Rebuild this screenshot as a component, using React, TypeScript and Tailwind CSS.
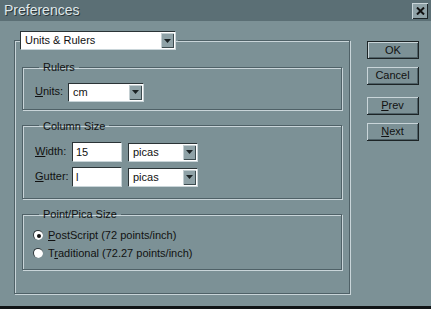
import React from "react"

const etched = "border border-[#4f6167] shadow-[inset_1px_1px_0_#c9d5d9,1px_1px_0_#c9d5d9]"

function Arrow() {
  return (
    <div className="flex h-full w-[13px] items-center justify-center bg-[#8fa2a7] shadow-[inset_1px_1px_0_#c3ced1,inset_-1px_-1px_0_#3d4c50]">
      <svg width="7" height="4" viewBox="0 0 7 4">
        <path d="M0 0h7L3.5 4z" fill="#1b2224" />
      </svg>
    </div>
  )
}

function Select({ value, w, h = 18 }: { value: string; w: number; h?: number }) {
  return (
    <div
      className="flex items-stretch bg-white border-t border-l border-[#2a3336] shadow-[1px_1px_0_#c9d5d9] p-[1px] pl-[4px]"
      style={{ width: w, height: h }}
    >
      <span className="flex-1 leading-[15px] text-[#111]">{value}</span>
      <Arrow />
    </div>
  )
}

function Input({ value }: { value: string }) {
  return (
    <div className="flex h-[19px] w-[49px] items-center bg-white border-t border-l border-[#2a3336] shadow-[1px_1px_0_#c9d5d9] pl-[3px] text-[#111]">
      {value}
    </div>
  )
}

function Button({ label, def }: { label: React.ReactNode; def?: boolean }) {
  return (
    <div
      className={`flex h-[18px] w-[52px] items-center justify-center text-[#111] ${
        def ? "border border-[#1c2426]" : "border-b border-r border-[#1c2426]"
      } shadow-[inset_1px_1px_0_#c9d5d9,inset_-1px_-1px_0_#4f6167]`}
    >
      {label}
    </div>
  )
}

function Radio({ checked, label }: { checked?: boolean; label: React.ReactNode }) {
  return (
    <div className="flex items-center gap-[5px] leading-[13px]">
      <div className="flex h-[10px] w-[10px] items-center justify-center rounded-full bg-white border-t border-l border-[#2a3336]">
        {checked && <div className="h-[4px] w-[4px] rounded-full bg-[#111]" />}
      </div>
      <span className="text-[#111]">{label}</span>
    </div>
  )
}

export default function App() {
  return (
    <div
      className="flex h-[309px] w-[431px] flex-col bg-[#7c9196] text-[11px] border-b-[3px] border-[#101416]"
      style={{ fontFamily: '"Liberation Sans", Arial, sans-serif' }}
    >
      <div className="flex h-[21px] items-center justify-between bg-[#5b6f75] pl-[4px] pr-[3px]">
        <span className="text-[14px] text-[#dfe7ea] [text-shadow:1px_1px_0_#2b3437]">Preferences</span>
        <div className="flex h-[16px] w-[16px] items-center justify-center bg-[#8fa2a7] shadow-[inset_1px_1px_0_#c9d5d9,inset_-1px_-1px_0_#1c2426]">
          <svg width="9" height="8" viewBox="0 0 9 8">
            <path d="M1 0.5L8 7.5M8 0.5L1 7.5" stroke="#111" strokeWidth="2" />
          </svg>
        </div>
      </div>

      <div className="flex flex-1">
        <fieldset className={`ml-[14px] mt-[10px] mb-[12px] w-[336px] px-[7px] pb-[12px] ${etched}`}>
          <legend className="-ml-[2px] pr-[3px]">
            <Select value="Units & Rulers" w={155} />
          </legend>

          <fieldset className={`mt-[10px] px-[12px] pt-[7px] pb-[8px] ${etched}`}>
            <legend className="ml-[4px] px-[4px] text-[#111]">Rulers</legend>
            <div className="flex items-center">
              <span className="w-[33px] text-[#111]"><u>U</u>nits:</span>
              <Select value="cm" w={75} />
            </div>
          </fieldset>

          <fieldset className={`mt-[8px] px-[12px] pt-[8px] pb-[12px] ${etched}`}>
            <legend className="ml-[4px] px-[4px] text-[#111]">Column Size</legend>
            <div className="flex flex-col gap-[6px]">
              <div className="flex items-center">
                <span className="w-[37px] text-[#111]"><u>W</u>idth:</span>
                <Input value="15" />
                <div className="ml-[7px]"><Select value="picas" w={69} /></div>
              </div>
              <div className="flex items-center">
                <span className="w-[37px] text-[#111]"><u>G</u>utter:</span>
                <Input value="l" />
                <div className="ml-[7px]"><Select value="picas" w={69} /></div>
              </div>
            </div>
          </fieldset>

          <fieldset className={`mt-[7px] px-[10px] pt-[6px] pb-[9px] ${etched}`}>
            <legend className="ml-[6px] px-[4px] text-[#111]">Point/Pica Size</legend>
            <div className="flex flex-col gap-[5px]">
              <Radio checked label={<><u>P</u>ostScript (72 points/inch)</>} />
              <Radio label={<>T<u>r</u>aditional (72.27 points/inch)</>} />
            </div>
          </fieldset>
        </fieldset>

        <div className="ml-[17px] mt-[20px] flex flex-col">
          <Button def label="OK" />
          <div className="mt-[8px]"><Button label="Cancel" /></div>
          <div className="mt-[12px]"><Button label={<><u>P</u>rev</>} /></div>
          <div className="mt-[8px]"><Button label={<><u>N</u>ext</>} /></div>
        </div>
      </div>
    </div>
  )
}
